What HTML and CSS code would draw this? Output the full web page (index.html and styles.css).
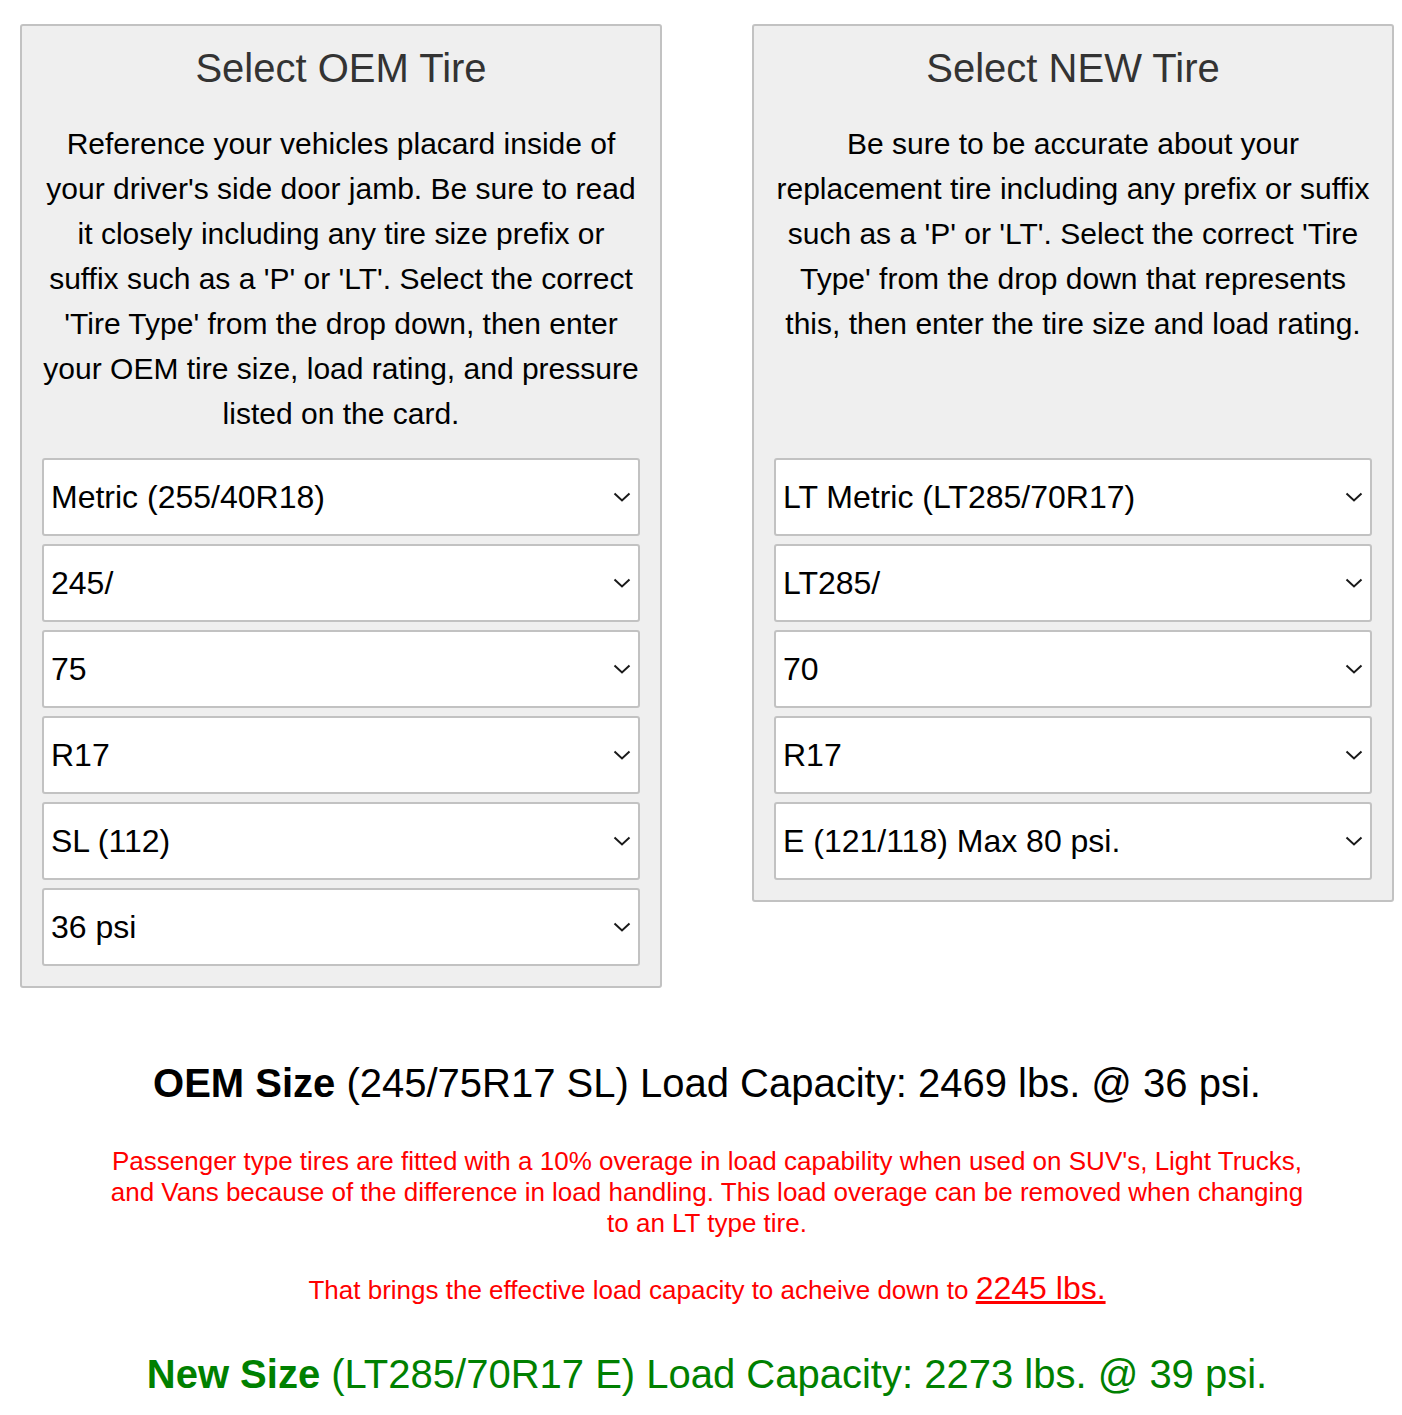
FILE: index.html
```html
<!DOCTYPE html>
<html lang="en">
<head>
    <meta charset="UTF-8">
    <title>Tire Load Capacity Calculator</title>
    <link rel="stylesheet" href="styles.css">
</head>
<body>
    <div class="page">
        <div class="panels">
            <!-- OEM tire -->
            <div class="panel">
                <h2>Select OEM Tire</h2>
                <p class="desc">Reference your vehicles placard inside of your driver's side door jamb. Be sure to read it closely including any tire size prefix or suffix such as a 'P' or 'LT'. Select the correct 'Tire Type' from the drop down, then enter your OEM tire size, load rating, and pressure listed on the card.</p>
                <div class="fields">
                    <div class="select-wrap">
                        <select name="oem_type">
                            <option selected>Metric (255/40R18)</option>
                            <option>P Metric (P255/40R18)</option>
                            <option>LT Metric (LT285/70R17)</option>
                        </select>
                        <svg class="chevron" width="18" height="10" viewBox="0 0 18 10"><polyline points="1.5,1.5 9,8.5 16.5,1.5" fill="none" stroke="#1a1a1a" stroke-width="2"/></svg>
                    </div>
                    <div class="select-wrap">
                        <select name="oem_width">
                            <option>235/</option>
                            <option selected>245/</option>
                            <option>255/</option>
                        </select>
                        <svg class="chevron" width="18" height="10" viewBox="0 0 18 10"><polyline points="1.5,1.5 9,8.5 16.5,1.5" fill="none" stroke="#1a1a1a" stroke-width="2"/></svg>
                    </div>
                    <div class="select-wrap">
                        <select name="oem_ratio">
                            <option>70</option>
                            <option selected>75</option>
                            <option>80</option>
                        </select>
                        <svg class="chevron" width="18" height="10" viewBox="0 0 18 10"><polyline points="1.5,1.5 9,8.5 16.5,1.5" fill="none" stroke="#1a1a1a" stroke-width="2"/></svg>
                    </div>
                    <div class="select-wrap">
                        <select name="oem_rim">
                            <option>R16</option>
                            <option selected>R17</option>
                            <option>R18</option>
                        </select>
                        <svg class="chevron" width="18" height="10" viewBox="0 0 18 10"><polyline points="1.5,1.5 9,8.5 16.5,1.5" fill="none" stroke="#1a1a1a" stroke-width="2"/></svg>
                    </div>
                    <div class="select-wrap">
                        <select name="oem_load">
                            <option selected>SL (112)</option>
                            <option>XL (116)</option>
                        </select>
                        <svg class="chevron" width="18" height="10" viewBox="0 0 18 10"><polyline points="1.5,1.5 9,8.5 16.5,1.5" fill="none" stroke="#1a1a1a" stroke-width="2"/></svg>
                    </div>
                    <div class="select-wrap">
                        <select name="oem_psi">
                            <option>35 psi</option>
                            <option selected>36 psi</option>
                            <option>37 psi</option>
                        </select>
                        <svg class="chevron" width="18" height="10" viewBox="0 0 18 10"><polyline points="1.5,1.5 9,8.5 16.5,1.5" fill="none" stroke="#1a1a1a" stroke-width="2"/></svg>
                    </div>
                </div>
            </div>

            <!-- New tire -->
            <div class="panel">
                <h2>Select NEW Tire</h2>
                <p class="desc">Be sure to be accurate about your replacement tire including any prefix or suffix such as a 'P' or 'LT'. Select the correct 'Tire Type' from the drop down that represents this, then enter the tire size and load rating.</p>
                <div class="fields">
                    <div class="select-wrap">
                        <select name="new_type">
                            <option>Metric (255/40R18)</option>
                            <option>P Metric (P255/40R18)</option>
                            <option selected>LT Metric (LT285/70R17)</option>
                        </select>
                        <svg class="chevron" width="18" height="10" viewBox="0 0 18 10"><polyline points="1.5,1.5 9,8.5 16.5,1.5" fill="none" stroke="#1a1a1a" stroke-width="2"/></svg>
                    </div>
                    <div class="select-wrap">
                        <select name="new_width">
                            <option>LT275/</option>
                            <option selected>LT285/</option>
                            <option>LT295/</option>
                        </select>
                        <svg class="chevron" width="18" height="10" viewBox="0 0 18 10"><polyline points="1.5,1.5 9,8.5 16.5,1.5" fill="none" stroke="#1a1a1a" stroke-width="2"/></svg>
                    </div>
                    <div class="select-wrap">
                        <select name="new_ratio">
                            <option>65</option>
                            <option selected>70</option>
                            <option>75</option>
                        </select>
                        <svg class="chevron" width="18" height="10" viewBox="0 0 18 10"><polyline points="1.5,1.5 9,8.5 16.5,1.5" fill="none" stroke="#1a1a1a" stroke-width="2"/></svg>
                    </div>
                    <div class="select-wrap">
                        <select name="new_rim">
                            <option>R16</option>
                            <option selected>R17</option>
                            <option>R18</option>
                        </select>
                        <svg class="chevron" width="18" height="10" viewBox="0 0 18 10"><polyline points="1.5,1.5 9,8.5 16.5,1.5" fill="none" stroke="#1a1a1a" stroke-width="2"/></svg>
                    </div>
                    <div class="select-wrap">
                        <select name="new_load">
                            <option>C (115/112) Max 50 psi.</option>
                            <option>D (118/115) Max 65 psi.</option>
                            <option selected>E (121/118) Max 80 psi.</option>
                        </select>
                        <svg class="chevron" width="18" height="10" viewBox="0 0 18 10"><polyline points="1.5,1.5 9,8.5 16.5,1.5" fill="none" stroke="#1a1a1a" stroke-width="2"/></svg>
                    </div>
                </div>
            </div>
        </div>

        <!-- Results -->
        <div class="results">
            <p class="size-line"><b>OEM Size</b> (245/75R17 SL) Load Capacity: 2469 lbs. @ 36 psi.</p>
            <p class="warning">Passenger type tires are fitted with a 10% overage in load capability when used on SUV's, Light Trucks, and Vans because of the difference in load handling. This load overage can be removed when changing to an LT type tire.</p>
            <p class="warning effective">That brings the effective load capacity to acheive down to <u class="big">2245 lbs.</u></p>
            <p class="size-line new"><b>New Size</b> (LT285/70R17 E) Load Capacity: 2273 lbs. @ 39 psi.</p>
        </div>
    </div>
</body>
</html>
```

FILE: styles.css
```css
* {
    margin: 0;
    padding: 0;
    box-sizing: border-box;
}

body {
    font-family: "Liberation Sans", Arial, sans-serif;
    color: #000;
    background: #fff;
}

.page {
    padding: 24px 8px 0 20px;
}

.panels {
    display: flex;
    justify-content: space-between;
    align-items: flex-start;
}

.panel {
    width: 642px;
    padding: 18px 20px 20px;
    background: #efefef;
    border: 2px solid #c2c2c2;
    border-radius: 3px;
}

.panel h2 {
    font-size: 40px;
    line-height: 48px;
    font-weight: normal;
    color: #333;
    text-align: center;
}

.desc {
    font-size: 30px;
    line-height: 45px;
    text-align: center;
    min-height: 315px;
    margin: 29px 0 22px;
}

.fields {
    display: flex;
    flex-direction: column;
    gap: 8px;
}

.select-wrap {
    position: relative;
}

select {
    display: block;
    width: 100%;
    height: 78px;
    padding: 0 40px 0 7px;
    font-family: inherit;
    font-size: 32px;
    color: #000;
    background: #fff;
    border: 2px solid #c2c2c2;
    border-radius: 3px;
    appearance: none;
    -webkit-appearance: none;
}

.chevron {
    position: absolute;
    right: 9px;
    top: 50%;
    transform: translateY(-50%);
    pointer-events: none;
}

.results {
    text-align: center;
    padding-top: 71px;
}

.size-line {
    font-size: 40px;
    line-height: 48px;
}

.warning {
    color: #f00;
    font-size: 26px;
    line-height: 31px;
    max-width: 1206px;
    margin: 39px auto 0;
}

.effective {
    margin-top: 34px;
}

.big {
    font-size: 32px;
}

.new {
    color: #008000;
    margin-top: 44px;
}
```
